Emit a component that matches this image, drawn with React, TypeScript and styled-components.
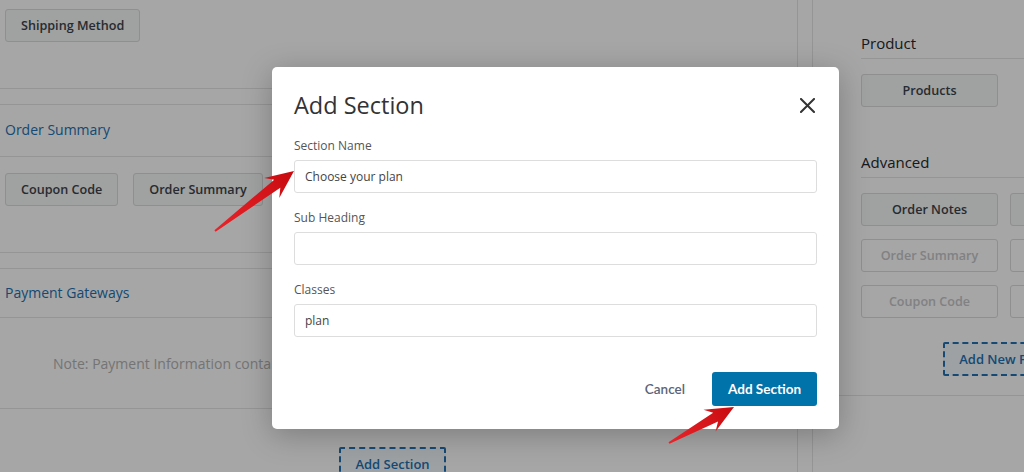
import React from "react";
import styled, { createGlobalStyle } from "styled-components";

const GlobalStyle = createGlobalStyle`
  * { box-sizing: border-box; }
  html, body { margin: 0; padding: 0; }
  body {
    font-family: "Open Sans", "Liberation Sans", sans-serif;
    background: #ffffff;
  }
`;

const Page = styled.div`
  position: relative;
  width: 1024px;
  height: 472px;
  overflow: hidden;
  display: flex;
  align-items: stretch;
  background: #ffffff;
`;

const LeftPanel = styled.div`
  width: 798px;
  flex: none;
  border-right: 1px solid #e5e5e5;
  display: block;
`;

const TopBlock = styled.div`
  height: 89px;
  padding: 9px 0 0 5px;
  border-bottom: 1px solid #e5e5e5;
`;

const Card = styled.section`
  margin-top: 15px;
  border-top: 1px solid #e5e5e5;
  border-bottom: 1px solid #e5e5e5;
`;

const CardHeader = styled.div<{ $h: number }>`
  height: ${(p) => p.$h}px;
  display: flex;
  align-items: center;
  padding: 0 0 2px 5px;
  border-bottom: 1px solid #e5e5e5;
  font-size: 14px;
  font-weight: 500;
  color: #2271b1;
`;

const ButtonRow = styled.div`
  height: 95px;
  display: flex;
  align-items: flex-start;
  gap: 15px;
  padding: 16px 5px 0;
`;

const NoteBody = styled.div`
  height: 90px;
  display: flex;
  align-items: center;
  padding-left: 53px;
  font-size: 14px;
  color: #b3b3b3;
  white-space: nowrap;
  overflow: hidden;
`;

const FooterRow = styled.div`
  margin-top: 38px;
  display: flex;
  justify-content: center;
  padding-right: 12px;
`;

const BgButton = styled.button<{ $disabled?: boolean; $full?: boolean }>`
  height: 33px;
  padding: 0 15px;
  ${(p) => (p.$full ? "width: 137px;" : "")}
  border: 1px solid #dcdcde;
  border-radius: 3px;
  background: ${(p) => (p.$disabled ? "#ffffff" : "#f6f7f7")};
  color: ${(p) => (p.$disabled ? "#c6c7c9" : "#3c434a")};
  font-family: "Open Sans", "Liberation Sans", sans-serif;
  font-size: 12.6px;
  font-weight: 600;
  white-space: nowrap;
  overflow: hidden;
  flex: none;
`;

const DashedButton = styled.button`
  height: 34px;
  padding: 0 14px;
  border: 2px dashed #2271b1;
  border-radius: 2px;
  background: #f3f8fc;
  color: #2271b1;
  font-family: "Open Sans", "Liberation Sans", sans-serif;
  font-size: 13px;
  font-weight: 600;
  white-space: nowrap;
  flex: none;
`;

const RightPanel = styled.div`
  flex: 1;
  min-width: 0;
  margin-left: 14px;
  border-left: 1px solid #e5e5e5;
`;

const SideCard = styled.div`
  padding: 33px 0 19px 48px;
  border-bottom: 1px solid #e5e5e5;
`;

const SideHeading = styled.h3<{ $gap?: number }>`
  margin: ${(p) => p.$gap ?? 0}px 0 0;
  font-size: 15px;
  line-height: 20px;
  font-weight: 500;
  color: #23282d;
  padding-bottom: 5px;
  border-bottom: 1px solid #e5e5e5;
`;

const FieldGrid = styled.div`
  margin-top: 15px;
  display: grid;
  grid-template-columns: repeat(2, 137px);
  gap: 13px 12px;
`;

const AddNewWrap = styled.div`
  width: 286px;
  margin-top: 24px;
  display: flex;
  justify-content: center;
`;

const Overlay = styled.div`
  position: absolute;
  inset: 0;
  background: rgba(0, 0, 0, 0.35);
  display: flex;
  align-items: flex-start;
  padding: 67px 0 0 272px;
`;

const Modal = styled.div`
  width: 567px;
  height: 362px;
  background: #ffffff;
  border-radius: 5px;
  box-shadow: 0 6px 30px rgba(0, 0, 0, 0.25);
  padding: 22px 22px 23px;
  display: flex;
  flex-direction: column;
`;

const ModalHeader = styled.div`
  height: 32px;
  margin-bottom: 16px;
  display: flex;
  align-items: center;
  justify-content: space-between;
`;

const Title = styled.h2`
  margin: 0;
  font-size: 23.5px;
  line-height: 32px;
  font-weight: 400;
  color: #333333;
`;

const CloseButton = styled.button`
  width: 19px;
  height: 19px;
  padding: 0;
  border: none;
  background: none;
  display: flex;
  align-items: center;
  justify-content: center;
`;

const Form = styled.div`
  display: flex;
  flex-direction: column;
  gap: 16px;
`;

const Field = styled.label`
  display: flex;
  flex-direction: column;
`;

const Label = styled.span`
  font-size: 12px;
  line-height: 17px;
  color: #555555;
  margin-bottom: 6px;
`;

const Input = styled.input`
  height: 33px;
  width: 100%;
  border: 1px solid #dddddd;
  border-radius: 3px;
  padding: 0 10px;
  font-family: "Open Sans", "Liberation Sans", sans-serif;
  font-size: 12px;
  color: #444444;
  background: #ffffff;
  outline: none;
`;

const ModalFooter = styled.div`
  margin-top: auto;
  display: flex;
  justify-content: flex-end;
  align-items: center;
  gap: 13px;
`;

const CancelButton = styled.button`
  height: 34px;
  padding: 0 14px;
  border: none;
  background: none;
  font-family: Lato, "Liberation Sans", sans-serif;
  font-size: 13.5px;
  font-weight: 600;
  color: #5b6478;
`;

const PrimaryButton = styled.button`
  height: 34px;
  width: 105px;
  padding: 0;
  border: none;
  border-radius: 3px;
  background: #0073aa;
  color: #ffffff;
  font-family: Lato, "Liberation Sans", sans-serif;
  font-size: 13.5px;
  font-weight: 700;
`;

const Annotations = styled.svg`
  position: absolute;
  left: 0;
  top: 0;
  pointer-events: none;
`;

type Pt = [number, number];

function Arrow({ tail, tip }: { tail: Pt; tip: Pt }) {
  const dx = tip[0] - tail[0];
  const dy = tip[1] - tail[1];
  const L = Math.hypot(dx, dy);
  const ang = (Math.atan2(dy, dx) * 180) / Math.PI;
  const pts = `0,-1 ${L - 21},-5 ${L - 28},-12.5 ${L},0 ${L - 28},12.5 ${L - 21},5 0,1`;
  return (
    <g transform={`translate(${tail[0]} ${tail[1]}) rotate(${ang})`}>
      <polygon points={pts} fill="url(#arrowGrad)" />
    </g>
  );
}

export default function App() {
  return (
    <>
      <GlobalStyle />
      <Page>
        <LeftPanel>
          <TopBlock>
            <BgButton>Shipping Method</BgButton>
          </TopBlock>
          <Card>
            <CardHeader $h={52}>Order Summary</CardHeader>
            <ButtonRow>
              <BgButton>Coupon Code</BgButton>
              <BgButton>Order Summary</BgButton>
            </ButtonRow>
          </Card>
          <Card>
            <CardHeader $h={49}>Payment Gateways</CardHeader>
            <NoteBody>
              Note: Payment Information contained in this section is not editable
            </NoteBody>
          </Card>
          <FooterRow>
            <DashedButton>Add Section</DashedButton>
          </FooterRow>
        </LeftPanel>
        <RightPanel>
          <SideCard>
            <SideHeading>Product</SideHeading>
            <FieldGrid>
              <BgButton $full>Products</BgButton>
            </FieldGrid>
            <SideHeading $gap={45}>Advanced</SideHeading>
            <FieldGrid>
              <BgButton $full>Order Notes</BgButton>
              <BgButton $full aria-label="Custom HTML" />
              <BgButton $full $disabled>Order Summary</BgButton>
              <BgButton $full $disabled aria-label="Shipping" />
              <BgButton $full $disabled>Coupon Code</BgButton>
              <BgButton $full $disabled aria-label="Divider" />
            </FieldGrid>
            <AddNewWrap>
              <DashedButton>Add New Field</DashedButton>
            </AddNewWrap>
          </SideCard>
        </RightPanel>

        <Overlay>
          <Modal>
            <ModalHeader>
              <Title>Add Section</Title>
              <CloseButton aria-label="Close">
                <svg width="15" height="15" viewBox="0 0 15 15">
                  <path d="M1 1 L14 14 M14 1 L1 14" stroke="#333" strokeWidth="2" strokeLinecap="square" />
                </svg>
              </CloseButton>
            </ModalHeader>
            <Form>
              <Field>
                <Label>Section Name</Label>
                <Input defaultValue="Choose your plan" />
              </Field>
              <Field>
                <Label>Sub Heading</Label>
                <Input defaultValue="" />
              </Field>
              <Field>
                <Label>Classes</Label>
                <Input defaultValue="plan" />
              </Field>
            </Form>
            <ModalFooter>
              <CancelButton>Cancel</CancelButton>
              <PrimaryButton>Add Section</PrimaryButton>
            </ModalFooter>
          </Modal>
        </Overlay>

        <Annotations width="1024" height="472" viewBox="0 0 1024 472">
          <defs>
            <linearGradient id="arrowGrad" x1="0" y1="0" x2="1" y2="0">
              <stop offset="0" stopColor="#e8242a" />
              <stop offset="1" stopColor="#c80b10" />
            </linearGradient>
          </defs>
          <Arrow tail={[215, 231]} tip={[294, 171]} />
          <Arrow tail={[669, 443]} tip={[734, 407]} />
        </Annotations>
      </Page>
    </>
  );
}
